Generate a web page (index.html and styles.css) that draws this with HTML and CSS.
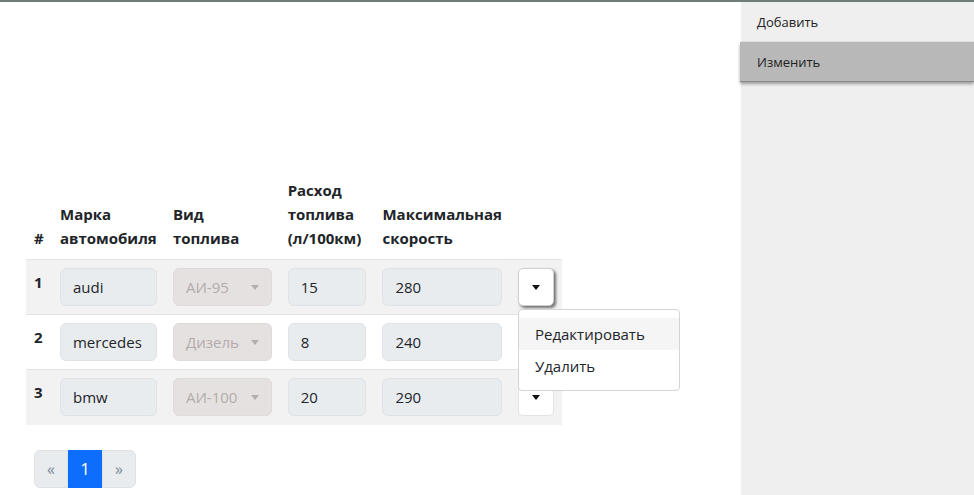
FILE: index.html
```html
<!DOCTYPE html>
<html lang="ru">
<head>
<meta charset="utf-8">
<link rel="stylesheet" href="styles.css">
</head>
<body>
<div class="topbar"></div>
<div class="layout">
  <main class="main">
    <table class="cars">
      <thead>
        <tr>
          <th class="c-num">#</th>
          <th class="c-brand">Марка автомобиля</th>
          <th class="c-fuel">Вид топлива</th>
          <th class="c-cons">Расход топлива (л/100км)</th>
          <th class="c-speed">Максимальная скорость</th>
        </tr>
      </thead>
      <tbody>
        <tr class="striped">
          <td class="num">1</td>
          <td><div class="field">audi</div></td>
          <td><div class="select">АИ-95<span class="caret grey"></span></div></td>
          <td><div class="field">15</div></td>
          <td><div class="field">280</div></td>
          <td class="act">
            <div class="btn focused"><span class="caret"></span></div>
            <div class="menu">
              <div class="menu-item hover">Редактировать</div>
              <div class="menu-item">Удалить</div>
            </div>
          </td>
        </tr>
        <tr>
          <td class="num">2</td>
          <td><div class="field">mercedes</div></td>
          <td><div class="select">Дизель<span class="caret grey"></span></div></td>
          <td><div class="field">8</div></td>
          <td><div class="field">240</div></td>
          <td class="act"><div class="btn"><span class="caret"></span></div></td>
        </tr>
        <tr class="striped">
          <td class="num">3</td>
          <td><div class="field">bmw</div></td>
          <td><div class="select">АИ-100<span class="caret grey"></span></div></td>
          <td><div class="field">20</div></td>
          <td><div class="field">290</div></td>
          <td class="act"><div class="btn"><span class="caret"></span></div></td>
        </tr>
      </tbody>
    </table>
    <nav class="pager">
      <span class="page disabled">«</span>
      <span class="page active">1</span>
      <span class="page disabled">»</span>
    </nav>
  </main>
  <aside class="side">
    <div class="side-item">Добавить</div>
    <div class="side-item selected">Изменить</div>
  </aside>
</div>
</body>
</html>
```

FILE: styles.css
```css
* { box-sizing: border-box; }
html, body { margin: 0; padding: 0; }
body {
  font-family: "Open Sans", "Noto Sans", sans-serif;
  font-size: 15px;
  line-height: 24px;
  color: #212529;
  background: #fff;
  height: 495px;
  overflow: hidden;
}
.topbar { height: 2px; background: #6d7d78; }
.layout { display: flex; height: 493px; }
.main { flex: 0 0 741px; padding: 168px 0 0 26px; }
.side { flex: 1; background: #efefef; }

.side-item {
  height: 40px;
  display: flex;
  align-items: center;
  padding-left: 16px;
  font-size: 13px;
  color: #222;
  border-bottom: 1px solid #e2e2e2;
}
.side-item.selected {
  background: #b8b8b8;
  border-bottom: 1px solid #8a8a8a;
  box-shadow: 0 2px 3px rgba(0,0,0,0.35);
  position: relative;
  margin-left: -1px;
  padding-left: 17px;
}

.cars { border-collapse: collapse; width: 536px; }
.cars th {
  font-weight: 700;
  text-align: left;
  vertical-align: bottom;
  padding: 8px 8px 9px;
  border-bottom: 1px solid #e6e6e6;
}
.c-num { width: 26px; }
.c-brand { width: 113px; }
.c-fuel { width: 115px; }
.c-cons { width: 95px; }
.c-speed { width: 135px; }
.cars td {
  padding: 8px;
  vertical-align: top;
  border-top: 1px solid #e4e4e4;
  height: 55px;
}
.cars tr.striped td { background: #f2f2f2; }
.cars td.num { font-weight: 700; padding-top: 10px; }
.field, .select {
  height: 38px;
  border-radius: 6px;
  border: 1px solid #dfe3e7;
  background: #e9ecef;
  padding: 6px 12px;
  font-size: 15px;
  white-space: nowrap;
}
.select {
  background: #e6e1e1;
  border-color: #e0dada;
  color: #b2abab;
  display: flex;
  align-items: center;
  justify-content: space-between;
}
.caret {
  width: 0; height: 0;
  border-left: 4.5px solid transparent;
  border-right: 4.5px solid transparent;
  border-top: 5px solid #111;
}
.caret.grey { border-top-color: #b4adad; }
.act { position: relative; width: 52px; }
.btn {
  width: 36px;
  height: 38px;
  border-radius: 5px;
  background: #fff;
  border: 1px solid #e3e3e3;
  display: flex;
  align-items: center;
  justify-content: center;
}
.btn.focused {
  border-color: #cfcfcf;
  box-shadow: 2px 2px 3px rgba(0,0,0,0.55);
}
.menu {
  position: absolute;
  top: 49px;
  left: 8px;
  width: 162px;
  background: #fff;
  border: 1px solid #d4d4d4;
  border-radius: 4px;
  padding: 8px 0;
  z-index: 2;
}
.menu-item { padding: 4px 16px; font-size: 15px; }
.menu-item.hover { background: #f5f5f5; }

.pager { display: flex; margin: 25px 0 0 8px; }
.page {
  width: 34px;
  height: 38px;
  display: flex;
  align-items: center;
  justify-content: center;
  background: #e9ecef;
  color: #7b8a9b;
  border: 1px solid #dee2e6;
  font-size: 16px;
}
.page:first-child { border-radius: 6px 0 0 6px; }
.page:last-child { border-radius: 0 6px 6px 0; }
.page.active { background: #0d6efd; border-color: #0d6efd; color: #fff; font-size: 17px; }
```
